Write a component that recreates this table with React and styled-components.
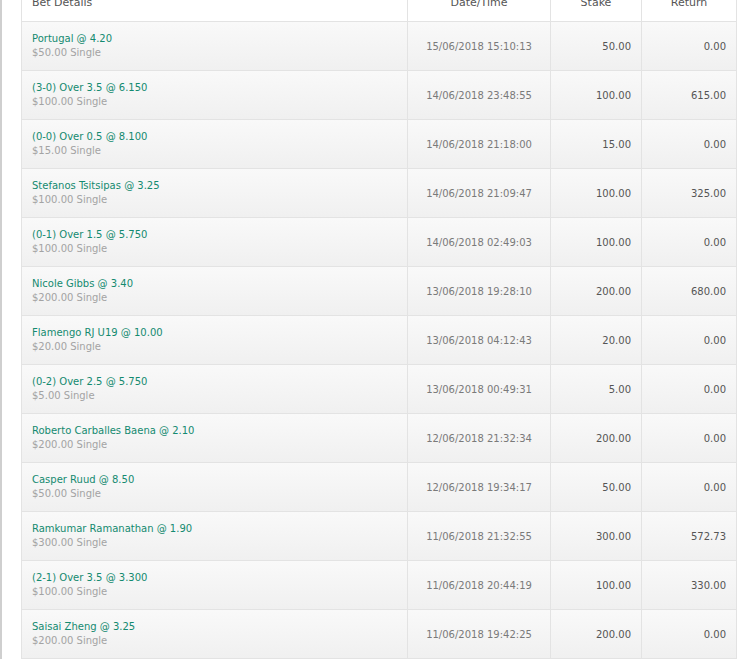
import React from "react";
import styled, { createGlobalStyle } from "styled-components";

const Global = createGlobalStyle`
  html, body { margin: 0; padding: 0; background: #fff; }
  body { font-family: "DejaVu Sans", Verdana, sans-serif; overflow: hidden; }
`;

const Page = styled.div`
  border-left: 2px solid #cfcfcf;
  min-height: 100vh;
  padding-left: 19px;
  box-sizing: border-box;
`;

const Table = styled.div`
  width: 716px;
  box-sizing: border-box;
  margin-top: -4px;
  border-left: 1px solid #e3e3e3;
  border-right: 1px solid #e3e3e3;
`;

const Row = styled.div`
  display: grid;
  grid-template-columns: 385px 143px 91px 95px;
  height: ${(p) => (p.$head ? "26px" : "49px")};
  border-bottom: 1px solid #e3e3e3;
  box-sizing: border-box;
  background: ${(p) =>
    p.$head ? "#fff" : "linear-gradient(to bottom, #f9f9f9, #f0f0f0)"};
`;

const Cell = styled.div`
  display: flex;
  flex-direction: column;
  justify-content: ${(p) => (p.$head ? "flex-start" : "center")};
  align-items: ${(p) =>
    p.$align === "right" ? "flex-end" : p.$align === "center" ? "center" : "flex-start"};
  padding: 0 10px;
  border-left: ${(p) => (p.$first ? "none" : "1px solid #e3e3e3")};
  font-size: 10px;
  color: #666;
  white-space: nowrap;
`;

const HeadText = styled.span`
  font-size: 11px;
  color: #555;
  line-height: 14px;
`;

const Selection = styled.span`
  color: #148a70;
  font-size: 10px;
  line-height: 14px;
`;

const Sub = styled.span`
  color: #a3a3a3;
  font-size: 10px;
  line-height: 14px;
`;

const DateText = styled.span`
  color: #7a7a7a;
`;

const Num = styled.span`
  color: #555;
`;

const bets = [
  ["Portugal @ 4.20", "$50.00 Single", "15/06/2018 15:10:13", "50.00", "0.00"],
  ["(3-0) Over 3.5 @ 6.150", "$100.00 Single", "14/06/2018 23:48:55", "100.00", "615.00"],
  ["(0-0) Over 0.5 @ 8.100", "$15.00 Single", "14/06/2018 21:18:00", "15.00", "0.00"],
  ["Stefanos Tsitsipas @ 3.25", "$100.00 Single", "14/06/2018 21:09:47", "100.00", "325.00"],
  ["(0-1) Over 1.5 @ 5.750", "$100.00 Single", "14/06/2018 02:49:03", "100.00", "0.00"],
  ["Nicole Gibbs @ 3.40", "$200.00 Single", "13/06/2018 19:28:10", "200.00", "680.00"],
  ["Flamengo RJ U19 @ 10.00", "$20.00 Single", "13/06/2018 04:12:43", "20.00", "0.00"],
  ["(0-2) Over 2.5 @ 5.750", "$5.00 Single", "13/06/2018 00:49:31", "5.00", "0.00"],
  ["Roberto Carballes Baena @ 2.10", "$200.00 Single", "12/06/2018 21:32:34", "200.00", "0.00"],
  ["Casper Ruud @ 8.50", "$50.00 Single", "12/06/2018 19:34:17", "50.00", "0.00"],
  ["Ramkumar Ramanathan @ 1.90", "$300.00 Single", "11/06/2018 21:32:55", "300.00", "572.73"],
  ["(2-1) Over 3.5 @ 3.300", "$100.00 Single", "11/06/2018 20:44:19", "100.00", "330.00"],
  ["Saisai Zheng @ 3.25", "$200.00 Single", "11/06/2018 19:42:25", "200.00", "0.00"],
];

export default function App() {
  return (
    <>
      <Global />
      <Page>
        <Table>
          <Row $head>
            <Cell $head $first>
              <HeadText>Bet Details</HeadText>
            </Cell>
            <Cell $head $align="center">
              <HeadText>Date/Time</HeadText>
            </Cell>
            <Cell $head $align="center">
              <HeadText>Stake</HeadText>
            </Cell>
            <Cell $head $align="center">
              <HeadText>Return</HeadText>
            </Cell>
          </Row>
          {bets.map((b, i) => (
            <Row key={i}>
              <Cell $first>
                <Selection>{b[0]}</Selection>
                <Sub>{b[1]}</Sub>
              </Cell>
              <Cell $align="center">
                <DateText>{b[2]}</DateText>
              </Cell>
              <Cell $align="right">
                <Num>{b[3]}</Num>
              </Cell>
              <Cell $align="right">
                <Num>{b[4]}</Num>
              </Cell>
            </Row>
          ))}
        </Table>
      </Page>
    </>
  );
}
